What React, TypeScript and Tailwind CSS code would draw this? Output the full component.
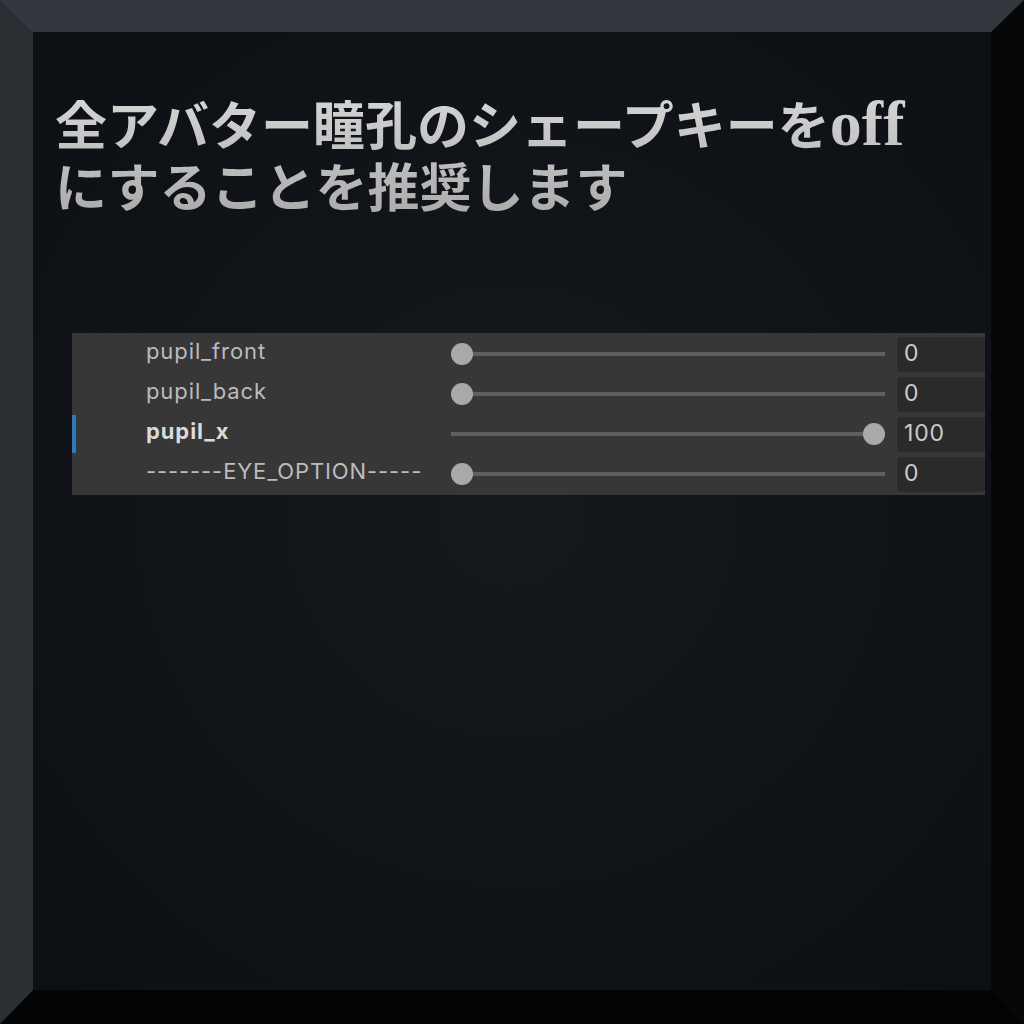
const rows = [
  { name: 'pupil_front', value: 0, active: false },
  { name: 'pupil_back', value: 0, active: false },
  { name: 'pupil_x', value: 100, active: true },
  { name: '-------EYE_OPTION-----', value: 0, active: false },
];

function Slider({ value }: { value: number }) {
  return (
    <div className="relative flex-1 h-[22px] flex items-center">
      <div className="w-full h-[4px] bg-[#5f5f5f]" />
      <div
        className="absolute top-0 w-[22px] h-[22px] rounded-full bg-[#a9a9a9]"
        style={{ left: `calc(${value / 100} * (100% - 22px))` }}
      />
    </div>
  );
}

export default function App() {
  return (
    <div
      className="w-[1024px] h-[1024px] border-t-[32px] border-l-[33px] border-r-[33px] border-b-[34px] border-t-[#33383e] border-l-[#2b3035] border-r-[#060709] border-b-[#030405]"
      style={{ fontFamily: 'Inter, "Noto Sans", sans-serif' }}
    >
      <div className="w-full h-full bg-[radial-gradient(ellipse_at_center,#15181d_0%,#0c0f13_100%)] flex flex-col">
        {/* Heading */}
        <h1
          className="h-[189px] pt-[65px] pl-[22px] text-[52px] leading-[62px] font-bold bg-gradient-to-b from-[#ececec] to-[#a9a9a9] bg-clip-text text-transparent"
          style={{ fontFamily: '"Liberation Serif", "Noto Sans CJK JP", serif' }}
        >
          全アバター瞳孔のシェープキーを<span className="text-[64px] leading-[0]">off</span>
          <br />
          にすることを推奨します
        </h1>

        {/* Blendshape panel */}
        <div className="mt-[112px] ml-[39px] mr-[6px] bg-[#373737] py-[1px]">
          {rows.map((row) => (
            <div key={row.name} className="flex items-center h-[40px]">
              <div className="w-[74px] h-full flex items-center">
                {row.active && <div className="w-[4px] h-[38px] bg-[#2c7bbd]" />}
              </div>
              <div
                className={`w-[305px] pb-[6px] text-[22px] tracking-[0.9px] whitespace-nowrap ${
                  row.active ? 'font-bold text-[#dadada]' : 'text-[#bcbcbc]'
                }`}
              >
                {row.name}
              </div>
              <Slider value={row.value} />
              <div className="ml-[12px] w-[88px] h-[35px] rounded-[3px] bg-[#2a2a2a] flex items-center pl-[7px] pb-[2px] text-[23px] tracking-[0.8px] text-[#cacaca]">
                {row.value}
              </div>
            </div>
          ))}
        </div>
      </div>
    </div>
  );
}
